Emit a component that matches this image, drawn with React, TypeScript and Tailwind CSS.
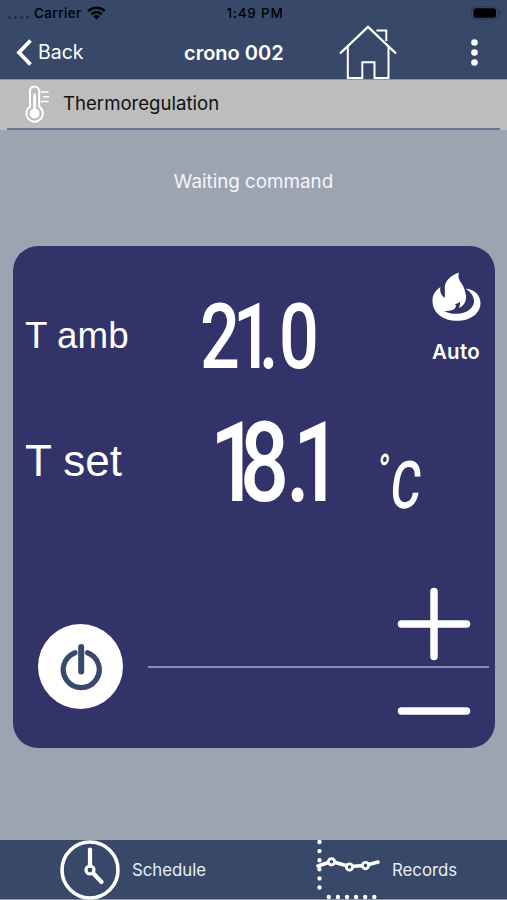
import type { ReactNode } from "react";

interface ReadoutProps {
  value: string;
  // left edge of each character, in px
  offsets: number[];
  width: number;
  height: number;
  fontSize: number;
}

const SQUEEZE = 0.77;

// LCD style number: narrow characters on fixed positions
function Readout({ value, offsets, width, height, fontSize }: ReadoutProps) {
  return (
    <svg width={width} height={height} className="overflow-visible fill-white font-['Roboto',sans-serif] font-medium">
      <text
        x={offsets.map((o) => o / SQUEEZE).join(" ")}
        y={height}
        fontSize={fontSize}
        transform={`scale(${SQUEEZE} 1)`}
      >
        {value}
      </text>
    </svg>
  );
}

function StatusBar() {
  return (
    <div className="h-[26px] flex items-center justify-between pl-2 pr-[5px] text-black text-[13.5px] font-medium">
      <div className="w-[140px] flex items-center">
        <div className="w-[26px] flex gap-[3px] pt-2">
          <span className="w-[3px] h-[3px] rounded-full bg-[#222e48]" />
          <span className="w-[3px] h-[3px] rounded-full bg-[#222e48]" />
          <span className="w-[3px] h-[3px] rounded-full bg-[#222e48]" />
          <span className="w-[3px] h-[3px] rounded-full bg-[#222e48]" />
        </div>
        <span className="tracking-[0.4px]">Carrier</span>
        <svg width="19" height="14" viewBox="0 0 19 14" className="ml-[5px]" fill="none" stroke="black" strokeWidth="2.5">
          <path d="M1.2 5.2a11.8 11.8 0 0 1 16.6 0" />
          <path d="M4.3 8.4a7.4 7.4 0 0 1 10.4 0" />
          <path d="M6.3 10.4a4.6 4.6 0 0 1 6.4 0L9.5 13.5z" fill="black" stroke="none" />
        </svg>
      </div>
      <span className="tracking-[0.8px]">1:49 PM</span>
      <div className="w-[140px] flex justify-end">
        <svg width="31" height="14" viewBox="0 0 31 14">
          <rect x="0.7" y="0.7" width="26.6" height="12.6" rx="4" fill="none" stroke="#2a3754" strokeWidth="1" />
          <rect x="2.5" y="2.3" width="22.5" height="9.4" rx="2.5" fill="black" />
          <path d="M28.5 5v4q1.8-.6 1.8-2t-1.8-2z" fill="#2a3754" />
        </svg>
      </div>
    </div>
  );
}

function NavBar() {
  return (
    <div className="h-[53px] flex items-center text-white">
      <button className="w-[184px] pl-4 flex items-center gap-[6px]">
        <svg width="16" height="27" viewBox="0 0 16 27" fill="none" stroke="white" strokeWidth="3.8">
          <path d="M14.5 1.5L3 13.5l11.5 12" />
        </svg>
        <span className="text-[19.5px]">Back</span>
      </button>
      <h1 className="w-[155px] font-semibold text-[20px] whitespace-nowrap">crono 002</h1>
      <svg width="58" height="55" viewBox="0 0 58 55" className="shrink-0" fill="none" stroke="white" strokeWidth="2">
        <path d="M1 28.5L29 2l28 26.5" strokeWidth="2.4" />
        <path d="M8.8 22v31h14.5V37.2h12.2V53h14V22" />
        <path d="M37.5 5.5h9.8v10.5" />
      </svg>
      <button className="ml-auto pr-[29px]" aria-label="More">
        <svg width="7" height="28" viewBox="0 0 7 28" fill="white">
          <circle cx="3.5" cy="3.5" r="3.3" />
          <circle cx="3.5" cy="13.5" r="3.3" />
          <circle cx="3.5" cy="23.5" r="3.3" />
        </svg>
      </button>
    </div>
  );
}

function ThermometerIcon() {
  return (
    <svg width="25" height="38" viewBox="0 0 25 38" fill="none" stroke="white" strokeWidth="2">
      <path d="M6 21.7V6a4.6 4.6 0 0 1 9.2 0v15.700a8.200 8.200 0 1 1-9.200 0z" />
      <path d="M10.6 10v16" strokeWidth="2.800" strokeLinecap="round" />
      <circle cx="10.6" cy="28.5" r="5" fill="white" stroke="none" />
      <path d="M17 7h7.500M19 11.800h6M17 16.500h7.500" strokeWidth="1.500" />
    </svg>
  );
}

function FlameIcon() {
  return (
    <svg width="49" height="49" viewBox="0 0 49 49" fill="white">
      <path d="M27 .5C20 3 13.5 8 12.8 14.5c-.3 4 .8 8-.3 11.5C9 23 7.5 19 8.5 15 3.5 18.5.5 22.5.5 28.5.5 41 11 48.8 25 48.8S48.5 41 48.5 31c0-8-6.5-14-15-14.3 5.5 3 8.800 8 8.500 13.300-.5 6.500-8 11.500-17 11.800-5 .2-9.500-.8-12.700-2.800 5.200.3 9.200-.7 11-3.200 1-1.500.7-2.800-.3-3.800 2.300-.2 3.800-1 5-2.500.3 2.500-.2 4.500-1.200 6.500 4.700-1.800 7.500-6 7.200-11.500-.2-3.500-1.200-6-2-8.500C30.500 11.500 24.500 7 27 .5z" />
    </svg>
  );
}

function PowerIcon() {
  return (
    <svg width="44" height="50" viewBox="0 0 44 50" fill="none" stroke="#38496b" strokeLinecap="round">
      <path d="M16 10.700a18 18 0 1 0 12.500 0" strokeWidth="5.200" />
      <path d="M22.200 5v24.500" strokeWidth="6" />
    </svg>
  );
}

function ClockIcon() {
  return (
    <svg width="60" height="60" viewBox="0 0 60 60" fill="none" stroke="white">
      <circle cx="30" cy="30" r="28" strokeWidth="3.6" />
      <circle cx="30" cy="30" r="4" strokeWidth="3.2" />
      <path d="M30 26V9.5" strokeWidth="4.2" strokeLinecap="round" />
      <path d="M33 33l8.5 9" strokeWidth="4.2" strokeLinecap="round" />
    </svg>
  );
}

function RecordsIcon() {
  return (
    <svg width="64" height="60" viewBox="0 0 64 60" fill="none" stroke="white">
      <path d="M3.5 2v50" strokeWidth="4.4" strokeLinecap="round" strokeDasharray="0 9.1" />
      <path d="M12.8 57h46" strokeWidth="4.4" strokeLinecap="round" strokeDasharray="0 9.1" />
      <path d="M2 26l13.500-4.500L33.500 26.500l16-1L62 22" strokeWidth="3.600" strokeLinecap="round" />
      <g fill="#38496b" strokeWidth="2.800">
        <circle cx="15.5" cy="21.8" r="3.2" />
        <circle cx="33.5" cy="27" r="3.2" />
        <circle cx="49.5" cy="25.6" r="3.2" />
      </g>
    </svg>
  );
}

function Tab({ icon, label, className }: { icon: ReactNode; label: string; className: string }) {
  return (
    <button className={`flex items-center text-[16.8px] text-[#e9edf8] ${className}`}>
      {icon}
      <span className="pt-0.5">{label}</span>
    </button>
  );
}

export default function App() {
  return (
    <div className="w-[507px] h-[900px] flex flex-col overflow-hidden bg-[#9ca4b1] font-['Inter',sans-serif]">
      <header className="bg-[#384869]">
        <StatusBar />
        <NavBar />
      </header>

      <div className="h-[51px] shrink-0 px-[7px] bg-[#bdbdbd] border-t border-[#8b96a2]">
        <div className="h-[50px] flex items-center pl-[17px] gap-[14px] border-b-2 border-[#6a7490]">
          <ThermometerIcon />
          <span className="text-[18.6px] text-[#111]">Thermoregulation</span>
        </div>
      </div>

      <p className="mt-[39px] h-[26px] text-center leading-[26px] text-[18.8px] text-[#f4f6fb]">Waiting command</p>

      <main className="mt-[51px] mx-[13px] w-[482px] h-[502px] shrink-0 flex flex-col rounded-[25px] bg-[#323469] text-white">
        <div className="h-[133px] shrink-0 flex pl-3">
          <span className="w-[175px] pt-[68px] leading-[44px] font-['Liberation_Sans',sans-serif] text-[36.8px]">T amb</span>
          <div className="w-[231px] pt-[57px]">
            <Readout value="21.0" offsets={[0, 33, 59, 79]} width={116} height={65} fontSize={91} />
          </div>
          <div className="w-[50px] pt-[26px] flex flex-col items-center">
            <FlameIcon />
            <span className="mt-[17px] text-[20.5px] leading-7 font-semibold tracking-[0.3px]">Auto</span>
          </div>
        </div>

        <div className="h-[140px] shrink-0 flex pl-3">
          <span className="w-[192px] pt-[56px] leading-[52px] font-['Liberation_Sans',sans-serif] text-[44px]">T set</span>
          <div className="w-[166px] pt-[42px]">
            <Readout value="18.1" offsets={[-7, 23, 69, 76]} width={108} height={80} fontSize={112} />
          </div>
          <svg width="40" height="60" className="mt-[70px] overflow-visible fill-white font-['Roboto',sans-serif] font-medium">
            <text transform="translate(7 59) scale(0.7 1) skewX(-9)">
              <tspan x="-24" y="-22" fontSize="45">°</tspan>
              <tspan x="-2" y="0" fontSize="66">C</tspan>
            </text>
          </svg>
        </div>

        <div className="flex-1 flex pl-[25px]">
          <div className="w-[110px] pt-[105px]">
            <button className="w-[85px] h-[85px] rounded-full bg-white flex items-center justify-center" aria-label="Power">
              <PowerIcon />
            </button>
          </div>
          <div className="w-[341px] pt-[68px] flex flex-col">
            <button className="h-[79px] pr-[18px] flex justify-end" aria-label="Raise">
              <svg width="74" height="74" viewBox="0 0 74 74" stroke="white" strokeWidth="7.5" strokeLinecap="round">
                <path d="M37 4.5v65M4.5 37h65" />
              </svg>
            </button>
            <div className="h-[2px] bg-[#8c8eac]" />
            <button className="h-[80px] pt-[39px] pr-[18px] flex justify-end" aria-label="Lower">
              <svg width="74" height="8" viewBox="0 0 74 8" stroke="white" strokeWidth="7.5" strokeLinecap="round">
                <path d="M4.5 4h65" />
              </svg>
            </button>
          </div>
        </div>
      </main>

      <footer className="mt-auto h-[60px] shrink-0 flex bg-[#384869] border-b border-[#8c96aa]">
        <Tab icon={<ClockIcon />} label="Schedule" className="w-[256px] pl-[60px] gap-[12px]" />
        <Tab icon={<RecordsIcon />} label="Records" className="flex-1 pl-[60px] gap-[12px]" />
      </footer>
    </div>
  );
}
